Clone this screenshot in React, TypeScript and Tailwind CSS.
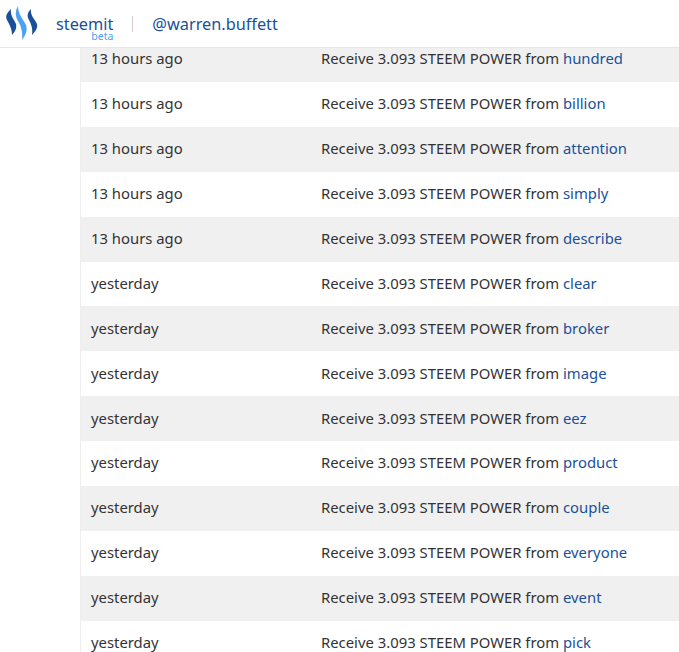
const ROWS = [
  ["13 hours ago", "hundred"],
  ["13 hours ago", "billion"],
  ["13 hours ago", "attention"],
  ["13 hours ago", "simply"],
  ["13 hours ago", "describe"],
  ["yesterday", "clear"],
  ["yesterday", "broker"],
  ["yesterday", "image"],
  ["yesterday", "eez"],
  ["yesterday", "product"],
  ["yesterday", "couple"],
  ["yesterday", "everyone"],
  ["yesterday", "event"],
  ["yesterday", "pick"],
];

function SteemLogo() {
  return (
    <svg width="33" height="35" viewBox="0 0 33 35" className="shrink-0">
      <path d="M6 3 C2 7 0 10 2 14 C4 18 7 22 7 29 C10 26 12 22 11 18 C9 13 5 10 6 3 Z" fill="#1a5099" />
      <path d="M13 0 C10 5 10 10 13 15 C16 20 18 26 17 34 C20 30 23 25 21 19 C18 13 13 8 13 0 Z" fill="#4ba2f2" />
      <path d="M26 3 C22 7 22 10 24 14 C26 18 28 22 27 29 C30 26 33 22 32 18 C30 13 25 10 26 3 Z" fill="#1a5099" />
    </svg>
  );
}

export default function App() {
  return (
    <div className="h-[652px] w-[679px] overflow-hidden bg-white font-['Noto_Sans',sans-serif]">
      <header className="relative z-10 flex h-[48px] items-center border-b border-[#e6e6e6] bg-white pl-[5px]">
        <SteemLogo />
        <div className="relative ml-[18px] mt-[1px] text-[16.3px] leading-none text-[#1a5099]">
          steemit
          <span className="absolute right-0 top-[15px] text-[10.5px] text-[#4ba2f2]">beta</span>
        </div>
        <div className="ml-[19px] h-[16px] w-px bg-[#e0c8d4]" />
        <div className="ml-[19px] mt-[1px] text-[16.3px] leading-none text-[#1a5099]">@warren.buffett</div>
      </header>
      <div className="-mt-[11px] ml-[80px] border-l border-[#eeeeee]">
        {ROWS.map(([when, who], i) => (
          <div
            key={who}
            className={`flex h-[44.92px] items-center pb-[2px] pl-[10px] text-[14.85px] text-[#333333] ${i % 2 === 0 ? "bg-[#f0f0f0]" : "bg-white"}`}
          >
            <span className="w-[230px] shrink-0">{when}</span>
            <span className="whitespace-nowrap">
              Receive 3.093 STEEM POWER from <span className="text-[#1a5099]">{who}</span>
            </span>
          </div>
        ))}
      </div>
    </div>
  );
}
